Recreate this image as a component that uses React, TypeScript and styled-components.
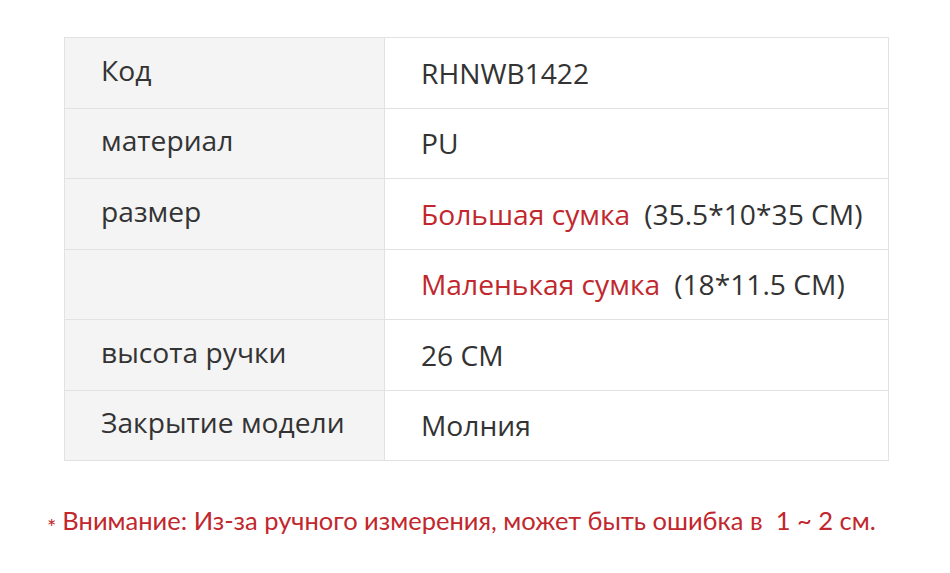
import styled, { createGlobalStyle } from "styled-components";

const Global = createGlobalStyle`
  body {
    margin: 0;
    background: #ffffff;
  }
`;

const Page = styled.div`
  width: 950px;
  height: 573px;
  padding-top: 37px;
  box-sizing: border-box;
  display: flex;
  flex-direction: column;
  align-items: flex-start;
`;

const Table = styled.div`
  margin-left: 64px;
  width: 824px;
  display: grid;
  grid-template-columns: 320px 1fr;
  border-top: 1px solid #e2e2e2;
  border-left: 1px solid #e2e2e2;
  font-family: "Open Sans", sans-serif;
  font-size: 28.2px;
  color: #333333;
`;

const Cell = styled.div<{ $label?: boolean }>`
  height: 70.5px;
  box-sizing: border-box;
  border-right: 1px solid #e2e2e2;
  border-bottom: 1px solid #e2e2e2;
  background: ${(p) => (p.$label ? "#f4f4f4" : "#ffffff")};
  padding-left: 36px;
  padding-bottom: ${(p) => (p.$label ? "6px" : "0")};
  display: flex;
  align-items: center;
  white-space: nowrap;
`;

const Red = styled.span`
  color: #c1272d;
  margin-right: 14px;
`;

const Note = styled.div`
  margin: 44px 0 0 47px;
  font-family: Lato, "Open Sans", sans-serif;
  font-size: 25.5px;
  color: #c1272d;
  white-space: nowrap;
`;

const Star = styled.span`
  font-size: 22px;
  margin-right: 6px;
  vertical-align: -5px;
`;

const rows: { label: string; value: React.ReactNode }[] = [
  { label: "Код", value: "RHNWB1422" },
  { label: "материал", value: "PU" },
  {
    label: "размер",
    value: (
      <>
        <Red>Большая сумка</Red>(35.5*10*35 CM)
      </>
    ),
  },
  {
    label: "",
    value: (
      <>
        <Red>Маленькая сумка</Red>(18*11.5 CM)
      </>
    ),
  },
  { label: "высота ручки", value: "26 CM" },
  { label: "Закрытие модели", value: "Молния" },
];

const App = () => {
  return (
    <>
      <Global />
      <Page>
        <Table>
          {rows.map((r, i) => (
            <>
              <Cell key={"l" + i} $label>
                {r.label}
              </Cell>
              <Cell key={"v" + i}>{r.value}</Cell>
            </>
          ))}
        </Table>
        <Note>
          <Star>*</Star>Внимание: Из-за ручного измерения, может быть ошибка в&nbsp; 1 ~ 2 см.
        </Note>
      </Page>
    </>
  );
};

export default App;
